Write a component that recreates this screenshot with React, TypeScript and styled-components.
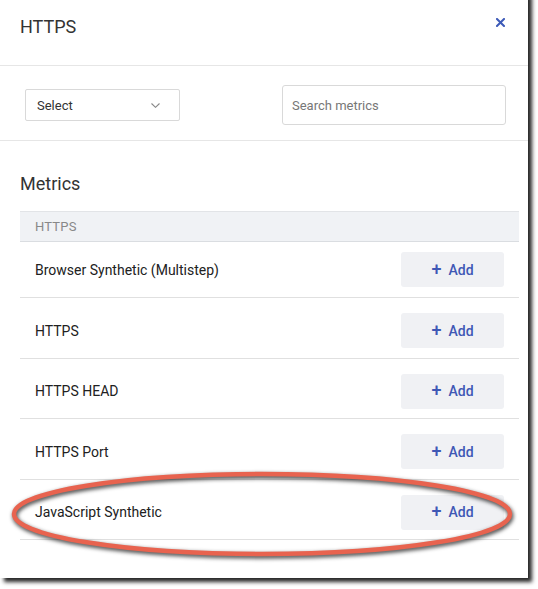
import React from "react";
import styled, { createGlobalStyle } from "styled-components";

const Global = createGlobalStyle`
  html { background: #ffffff; }
  html, body { margin: 0; padding: 0; }
  body {
    font-family: Roboto, "Noto Sans", "Liberation Sans", sans-serif;
    background: #ffffff;
    min-height: 589px;
    padding-bottom: 1px;
    overflow: hidden;
  }
  * { box-sizing: border-box; }
`;

const Panel = styled.div`
  position: relative;
  width: 528px;
  height: 586px;
  margin-top: -8px;
  padding-top: 8px;
  background: #ffffff;
  box-shadow: 4px 4px 4px rgba(0, 0, 0, 0.85);
  display: flex;
  flex-direction: column;
`;

const Header = styled.div`
  height: 66px;
  padding: 16px 23px 0 20px;
  border-bottom: 1px solid #e6e6e6;
  display: flex;
  justify-content: space-between;
  align-items: flex-start;
`;

const Title = styled.h1`
  margin: 0;
  font-size: 18px;
  line-height: 22px;
  font-weight: 400;
  color: #333333;
`;

const CloseButton = styled.button`
  margin-top: 2px;
  padding: 0;
  border: 0;
  background: none;
  width: 9px;
  height: 9px;
  display: flex;
  cursor: pointer;
`;

const Filters = styled.div`
  padding: 19px 22px 15px 25px;
  border-bottom: 1px solid #e6e6e6;
  display: flex;
  justify-content: space-between;
  align-items: center;
`;

const SelectBox = styled.div`
  width: 155px;
  height: 32px;
  border: 1px solid #d9d9d9;
  border-radius: 2px;
  padding: 0 19px 0 11px;
  display: flex;
  align-items: center;
  justify-content: space-between;
  font-size: 13px;
  color: #333333;
`;

const SearchInput = styled.input`
  width: 224px;
  height: 40px;
  border: 1px solid #d9d9d9;
  border-radius: 3px;
  padding: 0 9px;
  font-family: inherit;
  font-size: 13px;
  color: #333333;
  outline: none;
  &::placeholder { color: #777777; }
`;

const Section = styled.div`
  padding: 32px 9px 0 20px;
  display: flex;
  flex-direction: column;
`;

const SectionTitle = styled.h2`
  margin: 0 0 16px;
  font-size: 18px;
  line-height: 22px;
  font-weight: 400;
  color: #333333;
`;

const GroupHeader = styled.div`
  height: 31px;
  padding-left: 15px;
  background: #f0f2f5;
  border-top: 1px solid #e2e4e7;
  border-bottom: 1px solid #dadde1;
  display: flex;
  align-items: center;
  font-size: 13px;
  color: #888888;
  letter-spacing: 0.2px;
`;

const Row = styled.div<{ $first?: boolean }>`
  padding: ${(p) => (p.$first ? "10px 15px 10px" : "15px 15px 9.5px")};
  border-bottom: 1px solid #e0e0e0;
  display: flex;
  align-items: center;
  justify-content: space-between;
`;

const RowLabel = styled.span`
  font-size: 14px;
  color: #212121;
`;

const AddButton = styled.button`
  width: 103px;
  height: 35px;
  border: 0;
  border-radius: 3px;
  background: #f0f1f4;
  display: flex;
  align-items: center;
  justify-content: center;
  gap: 7px;
  font-family: inherit;
  font-size: 14px;
  font-weight: 500;
  color: #3f58b5;
  cursor: pointer;
`;

const Plus = styled.span`
  font-size: 18px;
  line-height: 1;
  font-weight: 500;
  margin-top: -2px;
`;

const Annotation = styled.svg`
  position: absolute;
  left: 0;
  top: 470px;
  width: 528px;
  height: 110px;
  pointer-events: none;
  overflow: visible;
  filter: drop-shadow(1px 2px 2px rgba(0, 0, 0, 0.8));
`;

const metrics = [
  "Browser Synthetic (Multistep)",
  "HTTPS",
  "HTTPS HEAD",
  "HTTPS Port",
  "JavaScript Synthetic",
];

export default function App() {
  return (
    <>
      <Global />
      <Panel>
        <Header>
          <Title>HTTPS</Title>
          <CloseButton aria-label="Close">
            <svg width="9" height="9" viewBox="0 0 9 9">
              <path d="M1 1 L8 8 M8 1 L1 8" stroke="#3d5ab8" strokeWidth="2" strokeLinecap="square" />
            </svg>
          </CloseButton>
        </Header>
        <Filters>
          <SelectBox>
            <span>Select</span>
            <svg width="9" height="5" viewBox="0 0 9 5">
              <path d="M0.5 0.5 L4.5 4.3 L8.5 0.5" stroke="#888" strokeWidth="1.1" fill="none" />
            </svg>
          </SelectBox>
          <SearchInput placeholder="Search metrics" />
        </Filters>
        <Section>
          <SectionTitle>Metrics</SectionTitle>
          <GroupHeader>HTTPS</GroupHeader>
          {metrics.map((m, i) => (
            <Row key={m} $first={i === 0}>
              <RowLabel>{m}</RowLabel>
              <AddButton>
                <Plus>+</Plus>
                <span>Add</span>
              </AddButton>
            </Row>
          ))}
        </Section>
        <Annotation viewBox="0 0 528 110">
          <ellipse cx="262" cy="52" rx="248" ry="40" fill="none" stroke="#e8634f" strokeWidth="4.5" />
        </Annotation>
      </Panel>
    </>
  );
}
